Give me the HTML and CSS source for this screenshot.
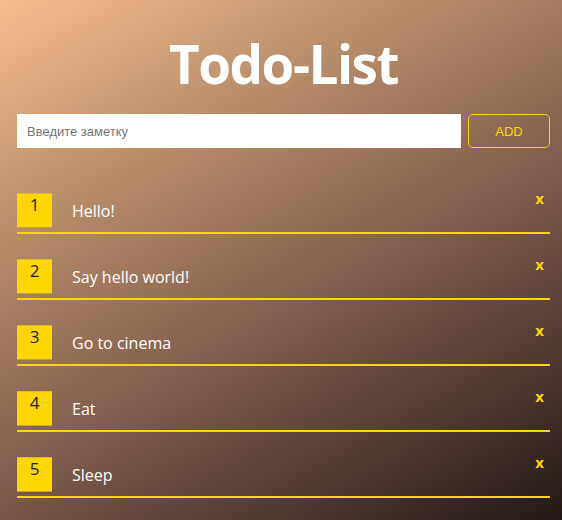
FILE: index.html
```html
<!DOCTYPE html>
<html lang="ru">
<head>
<meta charset="utf-8">
<title>Todo-List</title>
<link rel="stylesheet" href="styles.css">
</head>
<body>
<div class="app">
  <h1 class="title">Todo-List</h1>
  <form class="add-form">
    <input class="add-input" type="text" placeholder="Введите заметку">
    <button class="add-btn" type="button">ADD</button>
  </form>
  <ul class="list">
    <li class="item"><span class="num">1</span><span class="text">Hello!</span><span class="del">x</span></li>
    <li class="item"><span class="num">2</span><span class="text">Say hello world!</span><span class="del">x</span></li>
    <li class="item"><span class="num">3</span><span class="text">Go to cinema</span><span class="del">x</span></li>
    <li class="item"><span class="num">4</span><span class="text">Eat</span><span class="del">x</span></li>
    <li class="item"><span class="num">5</span><span class="text">Sleep</span><span class="del">x</span></li>
  </ul>
</div>
</body>
</html>
```
FILE: styles.css
```css
html, body {
  margin: 0;
  height: 100%;
}
body {
  background: linear-gradient(150deg, #f9bd8e 0%, #b58a68 30%, #7a584b 60%, #231916 100%);
  font-family: "Open Sans", sans-serif;
  color: #fff;
}
.app {
  padding: 0 12px 0 17px;
}
.title {
  margin: 0 0 20px;
  padding-top: 34px;
  text-align: center;
  font-size: 53px;
  font-weight: 700;
  line-height: 60px;
  letter-spacing: -1.5px;
}
.add-form {
  display: flex;
  gap: 7px;
  height: 34px;
}
.add-input {
  flex: 1;
  border: none;
  outline: none;
  background: #fff;
  padding: 0 10px;
  font-family: "Liberation Sans", Arial, sans-serif;
  font-size: 13px;
  color: #333;
}
.add-input::placeholder {
  color: #757575;
}
.add-btn {
  width: 82px;
  background: transparent;
  border: 1px solid #ffd700;
  border-radius: 5px;
  color: #ffd700;
  font-family: "Liberation Sans", Arial, sans-serif;
  font-size: 13px;
}
.list {
  list-style: none;
  margin: 45px 0 0;
  padding: 0;
  display: flex;
  flex-direction: column;
  gap: 25px;
}
.item {
  display: flex;
  align-items: flex-start;
  border-bottom: 2px solid #ffd700;
  padding-bottom: 4px;
}
.num {
  width: 35px;
  height: 35px;
  flex: none;
  background: #ffd700;
  box-shadow: inset 0 -1px 0 #c9a326, inset 0 1px 0 #e0b530;
  color: #222;
  text-align: center;
  font-size: 17px;
  line-height: 24px;
}
.text {
  flex: 1;
  margin-left: 20px;
  margin-top: 6px;
  font-size: 16px;
  line-height: 24px;
}
.del {
  margin-top: -3px;
  margin-right: 6px;
  color: #ffd700;
  font-weight: 700;
  font-size: 15px;
  line-height: 16px;
}
```
